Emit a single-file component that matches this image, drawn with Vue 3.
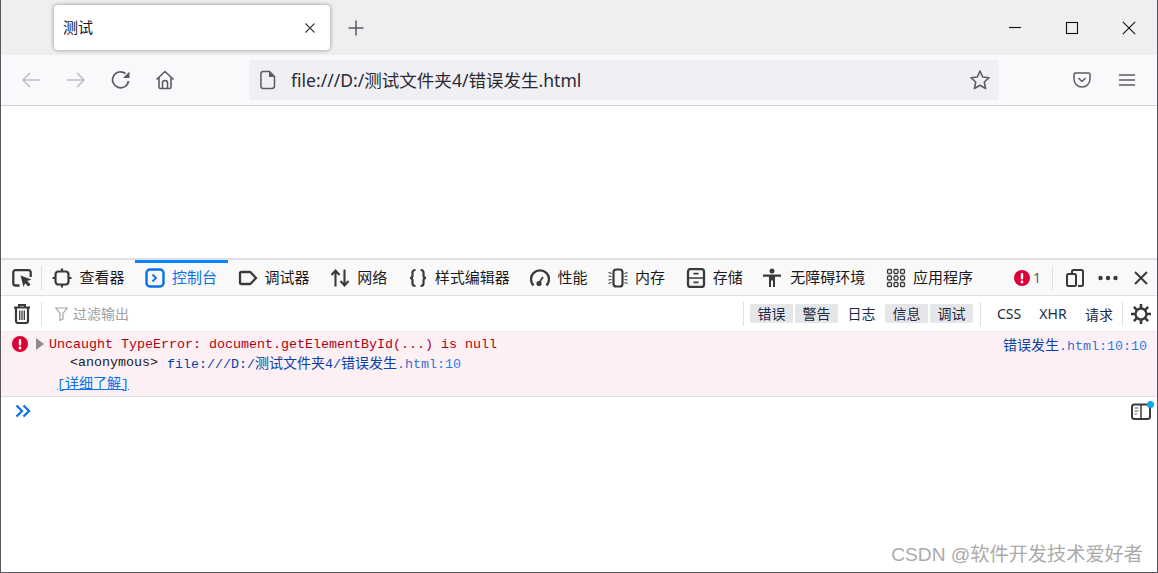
<script setup>
const tabs = [
  { label: '查看器', svg: '<rect x="3.500" y="3.500" width="13" height="13" rx="3"/><path d="M10 .5v3M10 16.500v3M.5 10h3M16.500 10h3"/>' },
  { label: '控制台', active: true, svg: '<rect x="1.500" y="1.500" width="17" height="17" rx="3.500" stroke-width="2.400"/><path d="M7.500 6.500l3.500 3.500-3.500 3.500" stroke-width="1.800"/>' },
  { label: '调试器', svg: '<path d="M3.500 4h8.300a1 1 0 0 1 .8.300l5.400 5.700-5.400 5.700a1 1 0 0 1-.8.300H3.500A1.500 1.500 0 0 1 2 14.500v-9A1.500 1.500 0 0 1 3.500 4z" stroke-width="2.300"/>' },
  { label: '网络', svg: '<path d="M5.500 18.500V2.500M1.500 7l4-4.500 4 4.500M14.500 1.500v16M10.500 13l4 4.500 4-4.500" stroke-width="2.100"/>' },
  { label: '样式编辑器', svg: '<path d="M7.500 2c-2 0-3 .8-3 2.500v3c0 1.300-.8 2.500-2.500 2.500 1.700 0 2.500 1.200 2.500 2.500v3c0 1.700 1 2.500 3 2.500M12.500 2c2 0 3 .8 3 2.500v3c0 1.300.8 2.500 2.500 2.500-1.700 0-2.500 1.200-2.500 2.500v3c0 1.700-1 2.500-3 2.500" stroke-width="2.200"/>' },
  { label: '性能', svg: '<path d="M3.500 17.500a9 9 0 1 1 13 0" stroke-width="2.300"/><path d="M9 15l4-6" stroke-width="1.700"/><circle cx="9" cy="15.500" r="2.600" fill="#3a3a3c" stroke="none"/>' },
  { label: '内存', svg: '<rect x="5.500" y="1.500" width="9" height="17" rx="2.800" stroke-width="2.200"/><path d="M.5 4.500l3 1M.5 8l3 .5M.5 12l3-.5M.5 15.500l3-1M19.500 4.500l-3 1M19.500 8l-3 .5M19.500 12l-3-.5M19.500 15.500l-3-1" stroke-width="1.200"/>' },
  { label: '存储', svg: '<rect x="2" y="1" width="16" height="18" rx="2.500" stroke-width="2.300"/><path d="M3 10h14M7.500 5.700h5M7.500 14.300h5" stroke-width="1.700"/>' },
  { label: '无障碍环境', svg: '<circle cx="9" cy="3" r="2.500" fill="#3a3a3c" stroke="none"/><path d="M0 6.500h18v2.200h-6V19h-2v-6.500H8V19H6V8.700H0z" fill="#3a3a3c" stroke="none"/>' },
  { label: '应用程序', svg: '<g stroke-width="1.300"><rect x="1.500" y="1.500" width="4" height="4" rx="1"/><rect x="8" y="1.500" width="4" height="4" rx="1"/><rect x="14.500" y="1.500" width="4" height="4" rx="1"/><rect x="1.500" y="8" width="4" height="4" rx="1"/><rect x="8" y="8" width="4" height="4" rx="1"/><rect x="14.500" y="8" width="4" height="4" rx="1"/><rect x="1.500" y="14.500" width="4" height="4" rx="1"/><rect x="8" y="14.500" width="4" height="4" rx="1"/><rect x="14.500" y="14.500" width="4" height="4" rx="1"/></g>' }
]
const filters = [
  { label: '错误', on: true },
  { label: '警告', on: true },
  { label: '日志', on: false },
  { label: '信息', on: true },
  { label: '调试', on: true }
]
</script>

<template>
  <div class="window">
    <header class="titlebar">
      <div class="tab">
        <span class="tab-title">测试</span>
        <svg class="tab-close" width="12" height="12" viewBox="0 0 12 12"><path d="M1.500 1.500l9 9M10.500 1.500l-9 9" stroke="#3a3a3c" stroke-width="1.100" fill="none"/></svg>
      </div>
      <svg class="new-tab" width="16" height="16" viewBox="0 0 16 16"><path d="M8 .5v15M.5 8h15" stroke="#5b5b66" stroke-width="1.500" fill="none"/></svg>
      <div class="winctl">
        <svg width="14" height="14" viewBox="0 0 14 14"><path d="M1 6.500h12" stroke="#111" stroke-width="1.100"/></svg>
        <svg width="14" height="14" viewBox="0 0 14 14"><rect x="1.500" y="1.500" width="11" height="11" fill="none" stroke="#111" stroke-width="1.100"/></svg>
        <svg width="14" height="14" viewBox="0 0 14 14"><path d="M.8.800l12.400 12.400M13.200.800L.8 13.200" stroke="#111" stroke-width="1.100"/></svg>
      </div>
    </header>

    <nav class="toolbar">
      <svg class="nav nav-back" width="20" height="20" viewBox="0 0 20 20"><path d="M19 10H2M9 3l-7 7 7 7" stroke="#bdbdc2" stroke-width="1.500" fill="none"/></svg>
      <svg class="nav nav-fwd" width="20" height="20" viewBox="0 0 20 20"><path d="M1 10h17M11 3l7 7-7 7" stroke="#bdbdc2" stroke-width="1.500" fill="none"/></svg>
      <svg class="nav nav-reload" width="20" height="20" viewBox="0 0 20 20"><path d="M17.500 11a8 8 0 1 1-3-7.500" stroke="#5b5b66" stroke-width="1.700" fill="none"/><path d="M18.500 1.500V8H12z" fill="#5b5b66"/></svg>
      <svg class="nav nav-home" width="20" height="20" viewBox="0 0 20 20"><path d="M1.500 9.500L10 1.500l8.500 8M4 7.500V17a1.500 1.500 0 0 0 1.500 1.500h9A1.500 1.500 0 0 0 16 17V7.500M7.500 18.500V13a2.500 2.500 0 0 1 5 0v5.500" stroke="#5b5b66" stroke-width="1.600" fill="none"/></svg>
      <div class="urlbar">
        <svg class="page-icon" width="16" height="20" viewBox="0 0 16 20"><path d="M3 1.500h6.500l5 5V16a2.500 2.500 0 0 1-2.500 2.500H3A2.500 2.500 0 0 1 .9 16V4A2.500 2.500 0 0 1 3 1.500z" stroke="#5b5b66" stroke-width="1.500" fill="none"/><path d="M9 1.500l5.500 5.500H9z" fill="#5b5b66"/></svg>
        <span class="url">file:///D:/测试文件夹4/错误发生.html</span>
        <svg class="star" width="22" height="22" viewBox="0 0 22 22"><path d="M11 2l2.700 6 6.300.7-4.700 4.300 1.300 6.500L11 16.300 5.400 19.500 6.700 13 2 8.700 8.300 8z" stroke="#5b5b66" stroke-width="1.600" stroke-linejoin="round" fill="none"/></svg>
      </div>
      <svg class="pocket" width="18" height="18" viewBox="0 0 18 18"><path d="M2.500 2h13A1.500 1.500 0 0 1 17 3.500V8A8 8 0 0 1 1 8V3.500A1.500 1.500 0 0 1 2.500 2z" stroke="#5b5b66" stroke-width="1.500" fill="none"/><path d="M5.500 7L9 10.500 12.500 7" stroke="#5b5b66" stroke-width="1.500" fill="none"/></svg>
      <svg class="menu" width="16" height="14" viewBox="0 0 16 14"><path d="M0 2h16M0 7h16M0 12h16" stroke="#5b5b66" stroke-width="1.500"/></svg>
    </nav>

    <main class="page"></main>

    <section class="devtools">
      <div class="dt-tabs">
        <svg class="pick" width="20" height="20" viewBox="0 0 20 20"><path d="M7.500 17.500H3.500A2.200 2.200 0 0 1 1.300 15.300V4.300a2.200 2.200 0 0 1 2.200-2.200h13a2.200 2.200 0 0 1 2.200 2.200V9" stroke="#3a3a3c" stroke-width="2.300" fill="none"/><path d="M8.500 7.500l11 4-4.300 1.600 3.300 3.300-2.100 2.100-3.300-3.300L11.500 19z" fill="#3a3a3c"/></svg>
        <i class="vsep"></i>
        <div v-for="t in tabs" :key="t.label" class="dt-tab" :class="{ active: t.active }">
          <svg class="dt-icon" width="20" height="20" viewBox="0 0 20 20" v-html="t.svg"></svg>
          <span class="dt-label">{{ t.label }}</span>
        </div>
        <div class="dt-right">
          <svg class="err-badge" width="16" height="16" viewBox="0 0 16 16"><circle cx="8" cy="8" r="8" fill="#dd0034"/><rect x="6.800" y="3" width="2.400" height="6.500" rx="1.100" fill="#fff"/><circle cx="8" cy="12" r="1.400" fill="#fff"/></svg>
          <span class="err-count">1</span>
          <i class="vsep sep-count"></i>
          <svg class="device" width="20" height="20" viewBox="0 0 20 20"><path d="M7 5V3.500A1.500 1.500 0 0 1 8.500 2h8A1.500 1.500 0 0 1 18 3.500v13a1.500 1.500 0 0 1-1.500 1.500H13" stroke="#3a3a3c" stroke-width="2" fill="none"/><rect x="2" y="6" width="9" height="12" rx="1.500" stroke="#3a3a3c" stroke-width="2" fill="none"/></svg>
          <svg class="dots" width="20" height="6" viewBox="0 0 20 6"><circle cx="2.500" cy="3" r="2.200" fill="#3a3a3c"/><circle cx="10" cy="3" r="2.200" fill="#3a3a3c"/><circle cx="17.500" cy="3" r="2.200" fill="#3a3a3c"/></svg>
          <svg class="dt-close" width="14" height="14" viewBox="0 0 14 14"><path d="M1 1l12 12M13 1L1 13" stroke="#3a3a3c" stroke-width="2" fill="none"/></svg>
        </div>
      </div>

      <div class="filterbar">
        <svg class="trash" width="18" height="20" viewBox="0 0 18 20"><path d="M6 2.500V1h6v1.500M1 3.500h16" stroke="#3a3a3c" stroke-width="2" fill="none"/><path d="M3 4v13a2 2 0 0 0 2 2h8a2 2 0 0 0 2-2V4" stroke="#3a3a3c" stroke-width="2.200" fill="none"/><path d="M6.700 6.500v9.500M9 6.500v9.500M11.300 6.500v9.500" stroke="#3a3a3c" stroke-width="1.300"/></svg>
        <i class="vsep sep-trash"></i>
        <svg class="funnel" width="13" height="14" viewBox="0 0 13 14"><path d="M.8 1h11.400L8 6.500V12l-3 1.500v-7z" stroke="#a5a5a8" stroke-width="1.200" fill="none"/></svg>
        <span class="filter-hint">过滤输出</span>
        <i class="vsep sep-levels"></i>
        <span v-for="f in filters" :key="f.label" class="level" :class="{ on: f.on }">{{ f.label }}</span>
        <i class="vsep sep-net"></i>
        <span class="net net-css">CSS</span>
        <span class="net net-xhr">XHR</span>
        <span class="net net-req">请求</span>
        <i class="vsep sep-gear"></i>
        <svg class="gear" width="20" height="20" viewBox="0 0 20 20"><circle cx="10" cy="10" r="5.500" stroke="#3a3a3c" stroke-width="2.400" fill="none"/><path d="M10 0v4M10 16v4M0 10h4M16 10h4M2.900 2.900l2.900 2.900M14.200 14.200l2.900 2.900M17.100 2.900l-2.900 2.900M5.800 14.200l-2.900 2.900" stroke="#3a3a3c" stroke-width="2.600"/></svg>
      </div>

      <div class="message">
        <div class="msg-head">
          <svg class="msg-icon" width="16" height="16" viewBox="0 0 16 16"><circle cx="8" cy="8" r="8" fill="#dd0034"/><rect x="6.800" y="3" width="2.400" height="6.500" rx="1.100" fill="#fff"/><circle cx="8" cy="12" r="1.400" fill="#fff"/></svg>
          <svg class="msg-arrow" width="8" height="12" viewBox="0 0 8 12"><path d="M0 0l8 6-8 6z" fill="#8c8c8f"/></svg>
          <span class="msg-text">Uncaught TypeError: document.getElementById(...) is null</span>
          <span class="msg-src"><b class="c1 cjk">错误发生</b><b class="c2">.html</b><b class="c3">:10:10</b></span>
        </div>
        <div class="msg-stack">
          <span class="fn">&lt;anonymous&gt;</span>
          <span class="loc"><b class="c1">file:///D:/<span class="cjk">测试文件夹</span>4/<span class="cjk">错误发生</span></b><b class="c2">.html</b><b class="c3">:10</b></span>
        </div>
        <a class="learn">[<span class="cjk">详细了解</span>]</a>
      </div>

      <div class="prompt">
        <svg class="chev" width="16" height="14" viewBox="0 0 16 14"><path d="M1.500 1.500L7 7l-5.500 5.500M8.500 1.500L14 7l-5.500 5.500" stroke="#0a6fe8" stroke-width="2.200" fill="none"/></svg>
        <span class="side-wrap">
          <svg width="20" height="18" viewBox="0 0 20 18"><rect x="1" y="2.500" width="18" height="14.500" rx="2.500" stroke="#3a3a3c" stroke-width="2" fill="none"/><path d="M10 3v14" stroke="#3a3a3c" stroke-width="1.500"/><path d="M3.500 6h4M3.500 9h4M3.500 12h2.500" stroke="#5b5b66" stroke-width="1.100"/></svg>
          <i class="side-dot"></i>
        </span>
      </div>
    </section>

    <div class="watermark">CSDN @软件开发技术爱好者</div>
  </div>
</template>

<style>
html, body { margin: 0; background: #fff; }
</style>

<style scoped>
.window {
  position: relative;
  box-sizing: border-box;
  width: 1158px;
  height: 573px;
  overflow: hidden;
  display: flex;
  flex-direction: column;
  background: #fff;
  border: 1px solid #58585c;
  border-top: 0;
  font-family: "Noto Sans", "Noto Sans CJK SC", sans-serif;
}
.titlebar {
  height: 55px;
  flex: none;
  display: flex;
  align-items: center;
  background: #efeff0;
}
.tab {
  box-sizing: border-box;
  width: 276px;
  height: 45px;
  margin: 0 0 0 53px;
  padding: 0 14px 0 9px;
  display: flex;
  align-items: center;
  justify-content: space-between;
  background: #fff;
  border-radius: 4px;
  box-shadow: 0 0 4px rgba(0, 0, 0, .4);
}
.tab-title {
  padding-bottom: 2px;
  font: 15px "Noto Sans CJK SC", sans-serif;
  color: #15141a;
}
.new-tab { margin-left: 18px; }
.winctl {
  margin-left: auto;
  margin-right: 21px;
  display: flex;
  gap: 43px;
}
.toolbar {
  box-sizing: border-box;
  height: 51px;
  flex: none;
  display: flex;
  align-items: center;
  background: #f9f9fb;
  border-bottom: 1px solid #cfcfd8;
  padding-bottom: 1px;
}
.nav-back { margin-left: 20px; }
.nav-fwd { margin-left: 25px; }
.nav-reload { margin-left: 25px; }
.nav-home { margin-left: 24px; }
.urlbar {
  box-sizing: border-box;
  width: 750px;
  height: 40px;
  margin-left: 74px;
  padding: 0 8px 0 11px;
  display: flex;
  align-items: center;
  background: #f0f0f4;
  border-radius: 4px;
}
.url {
  margin-left: 15px;
  font: 17.550px "Noto Sans", "Noto Sans CJK SC", sans-serif;
  color: #2b2a33;
}
.star { margin-left: auto; }
.pocket { margin-left: 74px; }
.menu { margin-left: 28px; }
.page { height: 152px; flex: none; }
.devtools {
  flex: 1;
  display: flex;
  flex-direction: column;
  border-top: 2px solid #e0e0e2;
}
.dt-tabs {
  box-sizing: border-box;
  height: 36px;
  flex: none;
  display: flex;
  align-items: center;
  background: #f9f9fa;
  border-bottom: 1px solid #e0e0e2;
}
.pick { margin-left: 11px; }
.vsep {
  display: block;
  width: 1px;
  height: 24px;
  flex: none;
  background: #e0e0e2;
}
.dt-tabs > .vsep { margin-left: 9px; }
.dt-tab {
  box-sizing: border-box;
  height: 35px;
  padding: 0 10.600px 0 10px;
  display: flex;
  align-items: center;
  gap: 7px;
  font: 15px "Noto Sans CJK SC", sans-serif;
  color: #1a1a1a;
  white-space: nowrap;
}
.dt-label { padding-bottom: 3px; }
.dt-tab:first-of-type { margin-left: .4px; }
.dt-tab.active { color: #0a6fe8; box-shadow: inset 0 3px 0 #0a84ff; }
.dt-icon {
  flex: none;
  fill: none;
  stroke: #3a3a3c;
  stroke-width: 2.200;
}
.dt-tab.active .dt-icon { stroke: #0a6fe8; }
.dt-right {
  margin-left: auto;
  display: flex;
  align-items: center;
}
.err-count {
  margin-left: 3px;
  font: 14px "Noto Sans", sans-serif;
  color: #5b5b66;
}
.sep-count { margin-left: 11px; }
.device { margin-left: 12px; }
.dots { margin-left: 13px; }
.dt-close { margin-left: 16px; margin-right: 9px; }
.filterbar {
  box-sizing: border-box;
  height: 36px;
  flex: none;
  display: flex;
  align-items: center;
  border-bottom: 1px solid #ececee;
}
.trash { margin-left: 12px; }
.sep-trash { margin-left: 10px; }
.funnel { margin-left: 13px; }
.filter-hint {
  margin-left: 5px;
  padding-bottom: 2px;
  font: 14px "Noto Sans CJK SC", sans-serif;
  color: #a0a0a3;
}
.sep-levels { margin-left: auto; margin-right: 6px; }
.level {
  box-sizing: border-box;
  width: 43px;
  height: 19px;
  margin-right: 2px;
  padding-bottom: 2px;
  display: flex;
  align-items: center;
  justify-content: center;
  border-radius: 2px;
  font: 14px "Noto Sans CJK SC", sans-serif;
  color: #1a2a44;
}
.level.on { background: #e6e6e8; }
.sep-net { margin-left: 5px; }
.net {
  flex: none;
  text-align: center;
  font: 14px "Noto Sans", "Noto Sans CJK SC", sans-serif;
  color: #1a2a44;
}
.net-css { margin-left: 15px; width: 26px; }
.net-xhr { margin-left: 17px; width: 28px; }
.net-req { margin-left: 18px; width: 28px; }
.sep-gear { margin-left: 9px; }
.gear { margin-left: 8px; margin-right: 6px; }
.message {
  box-sizing: border-box;
  height: 65px;
  flex: none;
  padding-top: 3px;
  background: #fcf0f4;
  border-bottom: 1px solid #e0e0e2;
  font-family: "Liberation Mono", "Noto Sans CJK SC", monospace;
  font-size: 13.330px;
}
.message b { font-weight: 400; }
.cjk { font-size: 14px; }
.msg-head {
  height: 18px;
  display: flex;
  align-items: center;
  color: #b00014;
}
.msg-icon { margin-left: 11px; }
.msg-arrow { margin-left: 8px; }
.msg-text { margin-left: 5px; white-space: pre; }
.msg-src { margin-left: auto; margin-right: 10px; }
.c1 { color: #0a3fa8; }
.c2 { color: #3a6fd0; }
.c3 { color: #1a86f5; }
.msg-stack {
  height: 18px;
  margin-left: 69px;
  display: flex;
  align-items: center;
  white-space: pre;
}
.fn { color: #1a1a1a; }
.loc { margin-left: 9px; }
.learn {
  display: inline-block;
  margin-left: 56px;
  margin-top: 1px;
  line-height: 24px;
  color: #0074e8;
  text-decoration: underline;
}
.prompt {
  height: 28px;
  flex: none;
  display: flex;
  align-items: center;
  justify-content: space-between;
  padding: 0 6px 0 14px;
}
.side-wrap { position: relative; display: flex; }
.side-dot {
  position: absolute;
  top: -1px;
  right: -3px;
  width: 7px;
  height: 7px;
  border-radius: 50%;
  background: #0ea5f5;
}
.watermark {
  position: absolute;
  right: 14px;
  bottom: 5px;
  font: 19.200px "Liberation Sans", "Noto Sans CJK SC", sans-serif;
  color: #aaa;
  white-space: nowrap;
}
</style>
